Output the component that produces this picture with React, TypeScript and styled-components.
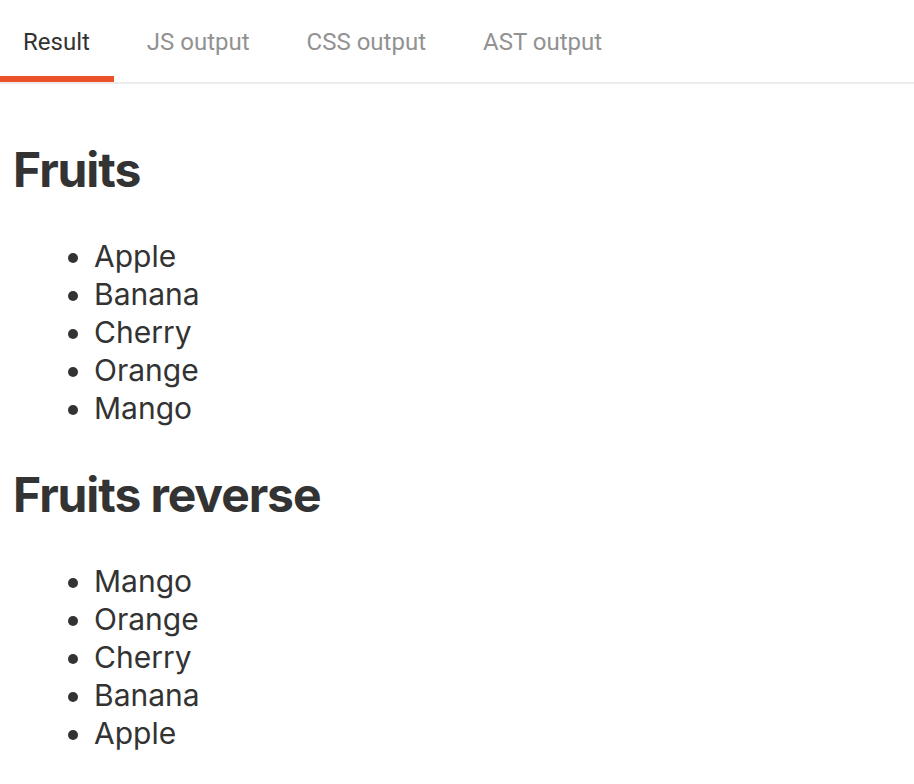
import React from "react";
import styled, { createGlobalStyle } from "styled-components";

const GlobalStyle = createGlobalStyle`
  html, body {
    margin: 0;
    padding: 0;
    background: #ffffff;
  }
  body {
    font-family: Inter, "Noto Sans", Roboto, sans-serif;
    color: #333333;
  }
`;

const Page = styled.div`
  display: flex;
  flex-direction: column;
  width: 914px;
`;

const TabBar = styled.nav`
  display: flex;
  gap: 10px;
  border-bottom: 2px solid #ececec;
`;

const Tab = styled.div<{ $active?: boolean }>`
  font-family: Roboto, "Liberation Sans", sans-serif;
  font-size: 24px;
  line-height: 28px;
  padding: 28px 24px 20px 23px;
  color: ${(p) => (p.$active ? "#333333" : "#929292")};
  border-bottom: 6px solid ${(p) => (p.$active ? "#ea5129" : "transparent")};
  cursor: pointer;
`;

const Content = styled.main`
  padding: 18px 13px 20px;
`;

const Heading = styled.h1`
  font-family: Inter, "Noto Sans", sans-serif;
  font-size: 48px;
  line-height: 58px;
  font-weight: 700;
  color: #333333;
  margin: 39px 0 38px;
  letter-spacing: -1.1px;
`;

const List = styled.ul`
  margin: 0;
  padding-left: 81px;
  list-style: disc;
`;

const Item = styled.li`
  font-family: Inter, "Noto Sans", sans-serif;
  font-size: 30px;
  line-height: 38px;
  color: #333333;
`;

const fruits = ["Apple", "Banana", "Cherry", "Orange", "Mango"];
const tabs = ["Result", "JS output", "CSS output", "AST output"];

export default function App() {
  return (
    <Page>
      <GlobalStyle />
      <TabBar>
        {tabs.map((t, i) => (
          <Tab key={t} $active={i === 0}>
            {t}
          </Tab>
        ))}
      </TabBar>
      <Content>
        <Heading>Fruits</Heading>
        <List>
          {fruits.map((f) => (
            <Item key={f}>{f}</Item>
          ))}
        </List>
        <Heading>Fruits reverse</Heading>
        <List>
          {[...fruits].reverse().map((f) => (
            <Item key={f}>{f}</Item>
          ))}
        </List>
      </Content>
    </Page>
  );
}
